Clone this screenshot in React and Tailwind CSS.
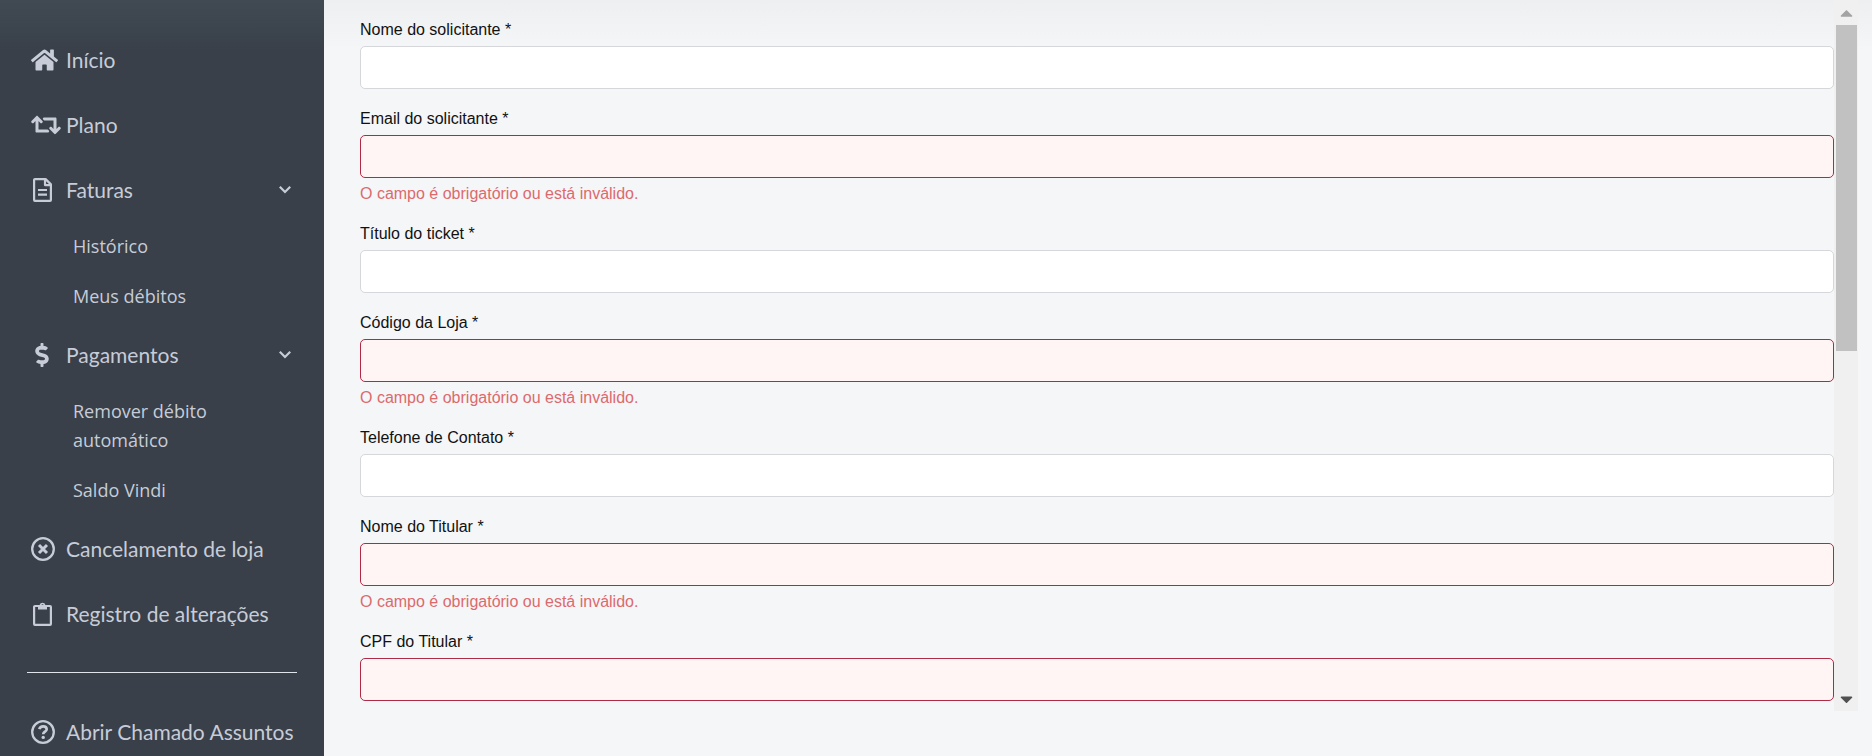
import React, { useState } from 'react';
import { FaCaretDown, FaCaretUp, FaDollarSign, FaHome, FaRetweet } from 'react-icons/fa';

const FileIcon = ({ className }) => (
  <svg viewBox="0 0 19 24" fill="none" stroke="currentColor" strokeWidth="2.2" strokeLinejoin="round" className={className}>
    <path d="M2 1.1h10.6l5.3 5.3v15.6a.9.9 0 0 1-.9.9H2a.9.9 0 0 1-.9-.9V2a.9.9 0 0 1 .9-.9z" />
    <path d="M12 1.5v5.6h5.6" />
    <path d="M5 12h9M5 16.6h9" />
  </svg>
);

const ClipboardIcon = ({ className }) => (
  <svg viewBox="0 0 19 24" fill="none" stroke="currentColor" strokeWidth="2.2" strokeLinejoin="round" className={className}>
    <path d="M2 4h15a.9.9 0 0 1 .9.9V22a.9.9 0 0 1-.9.9H2a.9.9 0 0 1-.9-.9V4.900a.9.9 0 0 1 .9-.9z" />
    <path
      fill="currentColor"
      stroke="none"
      fillRule="evenodd"
      d="M5 3h1.600a3 3 0 0 1 5.800 0H14v4.500H5zM9.500 2.200a1.100 1.100 0 1 0 0 2.200 1.100 1.100 0 0 0 0-2.200z"
    />
  </svg>
);

const TimesCircleIcon = ({ className }) => (
  <svg viewBox="0 0 24 24" fill="none" stroke="currentColor" className={className}>
    <circle cx="12" cy="12" r="10.8" strokeWidth="2.3" />
    <path d="M8 8l8 8M16 8l-8 8" strokeWidth="3" />
  </svg>
);

const QuestionCircleIcon = ({ className }) => (
  <svg viewBox="0 0 24 24" fill="none" stroke="currentColor" className={className}>
    <circle cx="12" cy="12" r="10.8" strokeWidth="2.3" />
    <path d="M8.300 9.200C8.800 7.300 10.200 6.300 12.200 6.300c2.100 0 3.500 1.200 3.500 2.900 0 2.500-3.500 2.500-3.500 5.100" strokeWidth="2.700" />
    <circle cx="12.200" cy="17.400" r="1.700" fill="currentColor" stroke="none" />
  </svg>
);

const ChevronIcon = ({ className }) => (
  <svg viewBox="0 0 14 9" fill="none" stroke="currentColor" strokeWidth="2.2" className={className}>
    <path d="M1.800 1.800L7 7l5.200-5.200" />
  </svg>
);

const menu = [
  { label: 'Início', icon: FaHome, iconWidth: 'w-[27px]' },
  { label: 'Plano', icon: FaRetweet, iconWidth: 'w-[30px]' },
  { label: 'Faturas', icon: FileIcon, iconWidth: 'w-[19px]', children: ['Histórico', 'Meus débitos'] },
  {
    label: 'Pagamentos',
    icon: FaDollarSign,
    iconWidth: 'w-[14px]',
    children: ['Remover débito automático', 'Saldo Vindi'],
  },
  { label: 'Cancelamento de loja', icon: TimesCircleIcon, iconWidth: 'w-6' },
  { label: 'Registro de alterações', icon: ClipboardIcon, iconWidth: 'w-[19px]' },
];

const fields = [
  { id: 'nome', label: 'Nome do solicitante *' },
  { id: 'email', label: 'Email do solicitante *', invalid: true },
  { id: 'titulo', label: 'Título do ticket *' },
  { id: 'codigo', label: 'Código da Loja *', invalid: true },
  { id: 'telefone', label: 'Telefone de Contato *' },
  { id: 'titular', label: 'Nome do Titular *', invalid: true },
  { id: 'cpf', label: 'CPF do Titular *', invalid: true, hideMessage: true },
];

const ItemContent = ({ icon: Icon, iconWidth, label }) => (
  <>
    <span className="flex w-[35px] shrink-0">
      <span className="flex min-w-[22px] justify-center">
        <Icon className={`h-6 shrink-0 ${iconWidth}`} />
      </span>
    </span>
    <span className="whitespace-nowrap">{label}</span>
  </>
);

const itemClass = 'flex h-[65px] w-full items-center pl-1 pr-[5px] text-left text-[21px]';

const MenuItem = ({ item }) => {
  const [open, setOpen] = useState(true);

  if (!item.children) {
    return (
      <li>
        <a href="#" className={itemClass}>
          <ItemContent icon={item.icon} iconWidth={item.iconWidth} label={item.label} />
        </a>
      </li>
    );
  }

  return (
    <li>
      <button type="button" className={itemClass} aria-expanded={open} onClick={() => setOpen(!open)}>
        <ItemContent icon={item.icon} iconWidth={item.iconWidth} label={item.label} />
        <ChevronIcon className="ml-auto h-[9px] w-[14px]" />
      </button>
      {open && (
        <ul className="pl-[46px] pr-10 font-['Open_Sans',sans-serif] text-lg">
          {item.children.map((child) => (
            <li key={child}>
              <a href="#" className="block pt-[10px] pb-[11px] leading-[29px]">{child}</a>
            </li>
          ))}
        </ul>
      )}
    </li>
  );
};

const Sidebar = () => (
  <aside className="w-[324px] shrink-0 bg-[#394049] bg-linear-to-b from-[#414a52] to-[#394049] to-[50px] px-[27px] pt-[27px] font-['Lato',sans-serif] text-[#c7ccd8]">
    <nav>
      <ul>
        {menu.map((item) => (
          <MenuItem key={item.label} item={item} />
        ))}
      </ul>
      <hr className="my-[26px] border-[#dfe5ea]" />
      <a href="#" className={itemClass}>
        <ItemContent icon={QuestionCircleIcon} iconWidth="w-6" label="Abrir Chamado Assuntos" />
      </a>
    </nav>
  </aside>
);

const Field = ({ field }) => (
  <div>
    <label htmlFor={field.id} className="mb-1 block text-base text-[#111111]">{field.label}</label>
    <input
      id={field.id}
      type="text"
      aria-invalid={!!field.invalid}
      className={
        field.invalid
          ? 'block h-[43px] w-full rounded-[5px] border border-[#b02a45] bg-[#fff5f4] px-3 outline-none'
          : 'block h-[43px] w-full rounded-[5px] border border-[#d5d7da] bg-white px-3 outline-none'
      }
    />
    {field.invalid && !field.hideMessage && (
      <p className="mt-[6px] text-base leading-5 text-[#dc6a6d]">O campo é obrigatório ou está inválido.</p>
    )}
  </div>
);

const ScrollTrack = () => (
  <div className="flex w-6 shrink-0 flex-col items-center bg-[#f0f0f0]" aria-hidden="true">
    <div className="flex h-[25px] items-center">
      <FaCaretUp className="h-5 w-[13px] text-[#a3a3a3]" />
    </div>
    <div className="h-[326px] w-[21px] bg-[#c1c1c1]" />
    <div className="mt-auto flex h-[25px] items-center">
      <FaCaretDown className="h-5 w-[13px] text-[#505050]" />
    </div>
  </div>
);

export default function App() {
  return (
    <div className="flex h-screen overflow-hidden bg-[#f5f6f8]">
      <Sidebar />
      <main className="min-w-0 flex-1 bg-linear-to-b from-[#eeeff1] to-[#f5f6f8] to-[50px] pl-9 pr-[14px] font-['Liberation_Sans',Arial,sans-serif]">
        <div className="flex">
          <form className="flex flex-1 flex-col gap-[18px] pt-[18px] pb-[10px]">
            {fields.map((field) => (
              <Field key={field.id} field={field} />
            ))}
          </form>
          <ScrollTrack />
        </div>
      </main>
    </div>
  );
}
